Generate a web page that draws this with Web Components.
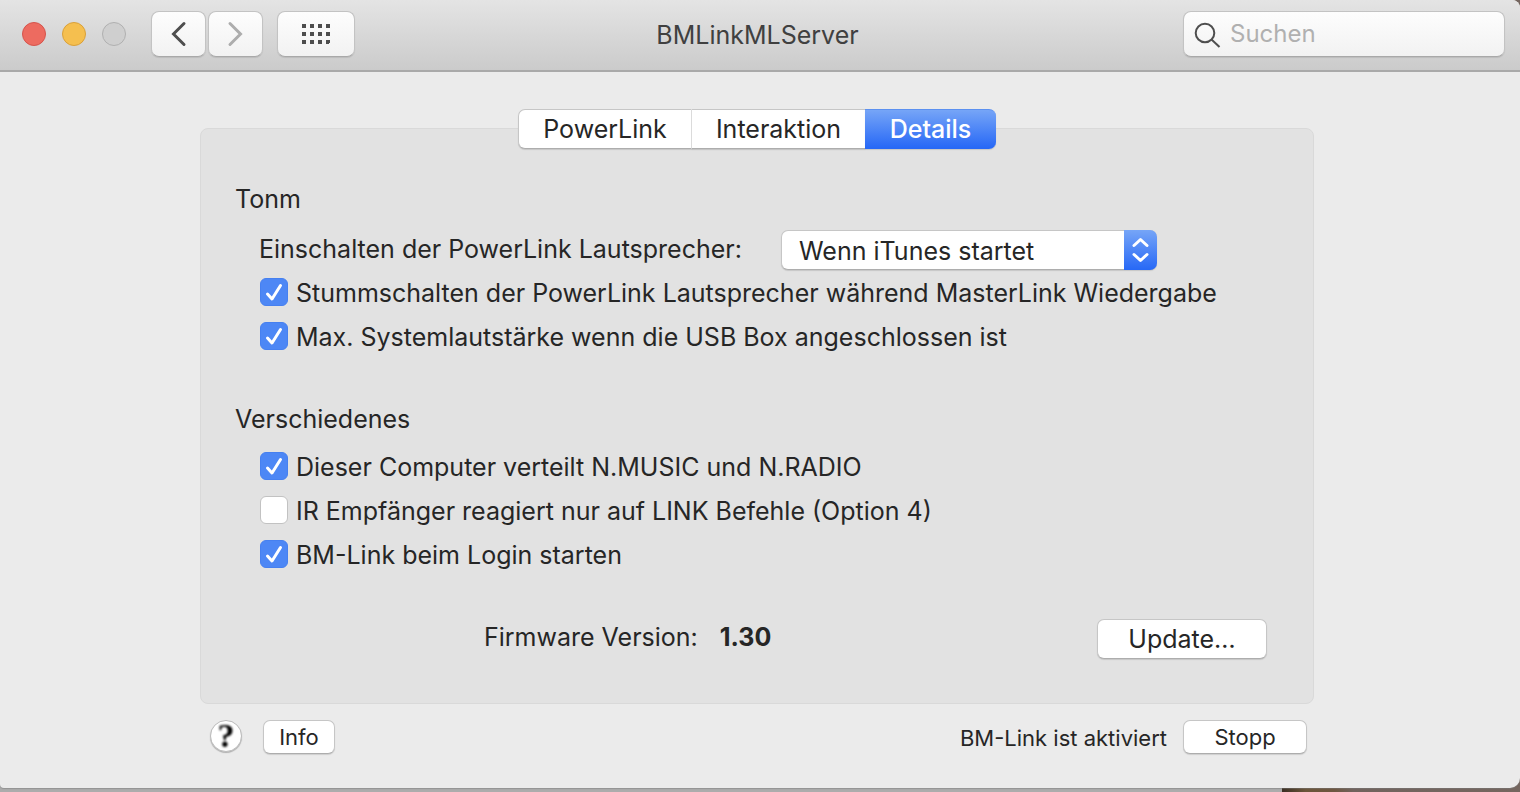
<!DOCTYPE html>
<html lang="de">
<head>
<meta charset="utf-8">
<title>BMLinkMLServer</title>
<style>
  html, body { margin: 0; }
  body {
    min-height: 100vh;
    font-family: Inter, "Liberation Sans", sans-serif;
    font-size: 25px;
    line-height: 32px;
    color: #262626;
    background: linear-gradient(90deg, #3a2d22, #6b5539 10%, #6e5640 22%, #71635d 30%, #75665f) right / 238px 100% no-repeat, #acacac;
  }
</style>
</head>
<body>
<pref-window>
  <tool-bar slot="toolbar"></tool-bar>
  <tab-panel>
    <pref-section heading="Tonm">
      <select-row></select-row>
      <check-row checked>Stummschalten der PowerLink Lautsprecher während MasterLink Wiedergabe</check-row>
      <check-row checked>Max. Systemlautstärke wenn die USB Box angeschlossen ist</check-row>
    </pref-section>
    <pref-section heading="Verschiedenes" spaced>
      <check-row checked>Dieser Computer verteilt N.MUSIC und N.RADIO</check-row>
      <check-row>IR Empfänger reagiert nur auf LINK Befehle (Option 4)</check-row>
      <check-row checked>BM-Link beim Login starten</check-row>
    </pref-section>
    <firmware-row></firmware-row>
  </tab-panel>
  <status-bar></status-bar>
</pref-window>

<script>
const define = (name, html, setup) => {
  const template = document.createElement('template');
  template.innerHTML = html;
  customElements.define(name, class extends HTMLElement {
    constructor() {
      super();
      this.attachShadow({ mode: 'open' }).append(template.content.cloneNode(true));
    }
    connectedCallback() { if (setup) setup(this, this.shadowRoot); }
  });
};

define('pref-window', `
<style>
  :host { display: block; background: #ebebeb; border-radius: 0 8px 10px 4px; overflow: hidden; box-shadow: 0 1px 1px #7c7c7c80; }
  main { padding: 37px 206px 34px 200px; }
</style>
<slot name="toolbar"></slot>
<main><slot></slot></main>`);

define('push-button', `
<style>
  :host { display: block; }
  button {
    box-sizing: border-box; display: block; width: 100%; height: var(--button-height, 34px); padding: 0;
    font: inherit; color: inherit; background: #fff; border: 1px solid #c6c6c6; border-bottom-color: #adadad;
    border-radius: 7px; box-shadow: 0 1px 1px #00000020;
  }
</style>
<button type="button"><slot></slot></button>`);

define('tool-bar', `
<style>
  :host {
    box-sizing: border-box; height: 72px; padding: 11px 15px 14px 22px; border-bottom: 2px solid #a9a9a9;
    background: linear-gradient(#e4e4e4, #cbcbcb);
    display: grid; grid-template-columns: 1fr auto 1fr; align-items: start;
  }
  .left { display: flex; align-items: center; }
  .lights { display: flex; gap: 16px; margin-right: 25px; }
  .lights button { box-sizing: border-box; width: 24px; height: 24px; padding: 0; border: 1px solid; border-radius: 50%; }
  .close { background: #ed6b60; border-color: #d5544c !important; }
  .min { background: #f5bf4f; border-color: #d9a03a !important; }
  .max { background: #cfcfcf; border-color: #b0b0b0 !important; }
  .nav { display: flex; gap: 2px; }
  .tool {
    box-sizing: border-box; height: 46px; width: 55px; padding: 0; border: 1px solid #c3c3c3; border-bottom-color: #a9a9a9; border-radius: 8px;
    background: linear-gradient(#fdfdfd, #f2f2f2); display: grid; place-items: center; box-shadow: 0 1px 1px #00000018;
  }
  .grid { width: 78px; margin-left: 14px; }
  h1 { margin: 0; font-size: 25px; line-height: 32px; font-weight: 400; color: #404040; padding: 8px 12px 0 0; }
  .search {
    box-sizing: border-box; width: 322px; height: 46px; justify-self: end; display: flex; align-items: center; gap: 8px; padding: 0 10px;
    border: 1px solid #c3c3c3; border-bottom-color: #a9a9a9; border-radius: 8px; background: linear-gradient(#fdfdfd, #f2f2f2); box-shadow: 0 1px 1px #00000018;
  }
  input { flex: 1; min-width: 0; border: 0; outline: 0; padding: 0; background: none; font: inherit; font-size: 24px; }
  input::placeholder { color: #b0b0b0; opacity: 1; }
  svg { display: block; }
</style>
<div class="left">
  <div class="lights">
    <button class="close" aria-label="Schließen"></button>
    <button class="min" aria-label="Minimieren"></button>
    <button class="max" aria-label="Zoomen" disabled></button>
  </div>
  <div class="nav">
    <button class="tool" aria-label="Zurück"><svg width="20" height="26" viewBox="0 0 20 26"><path d="M15 2.500 4.500 13 15 23.500" fill="none" stroke="#4e4e4e" stroke-width="3" stroke-linecap="round"/></svg></button>
    <button class="tool" aria-label="Vorwärts" disabled><svg width="20" height="26" viewBox="0 0 20 26"><path d="M4 2.500 14.500 13 4 23.500" fill="none" stroke="#adadad" stroke-width="3" stroke-linecap="round"/></svg></button>
  </div>
  <button class="tool grid" aria-label="Alle einblenden"><svg width="28" height="20" viewBox="0 0 28 20" fill="#4d4d4d"><path d="M0 0h4v4H0zM8 0h4v4H8zM16 0h4v4h-4zM24 0h4v4h-4zM0 8h4v4H0zM8 8h4v4H8zM16 8h4v4h-4zM24 8h4v4h-4zM0 16h4v4H0zM8 16h4v4H8zM16 16h4v4h-4zM24 16h4v3h-1v1h-3z"/></svg></button>
</div>
<h1>BMLinkMLServer</h1>
<label class="search">
  <svg width="28" height="28" viewBox="0 0 28 28" fill="none" stroke="#4e4e4e" stroke-width="2"><circle cx="11" cy="13" r="9.300"/><path d="m17.500 19.500 8 7.500"/></svg>
  <input type="search" placeholder="Suchen" aria-label="Suchen">
</label>`);

define('tab-panel', `
<style>
  :host { display: block; }
  .tabs { position: relative; display: flex; width: max-content; margin: 0 auto; }
  .tabs button {
    box-sizing: border-box; height: 40px; padding: 0; font: inherit; color: inherit; background: #fff;
    border: 1px solid #c6c6c6; border-bottom-color: #adadad; box-shadow: 0 1px 1px #00000020;
  }
  .one { width: 174px; border-radius: 7px 0 0 7px; border-right-color: #e0e0e0 !important; }
  .two { width: 173px; border-left: 0 !important; border-right: 0 !important; }
  .tabs .three {
    width: 131px; border-radius: 0 7px 7px 0; color: #fff; font-weight: 500; background: linear-gradient(#76a5f7, #2768f6);
    border: 0; border-top: 1px solid #5b90f0; border-bottom: 1px solid #2768f6;
  }
  section { margin-top: -21px; padding: 54px 46px 44px 34px; background: #e2e2e2; border: 1px solid #d9d9d9; border-radius: 8px; }
</style>
<div class="tabs" role="tablist">
  <button class="one" role="tab">PowerLink</button>
  <button class="two" role="tab">Interaktion</button>
  <button class="three" role="tab" aria-selected="true">Details</button>
</div>
<section role="tabpanel" aria-label="Details"><slot></slot></section>`);

define('pref-section', `
<style>
  :host { display: block; }
  :host([spaced]) { margin-top: 45px; }
  h2 { margin: 0 0 15px; font: inherit; }
  :host([spaced]) h2 { margin-bottom: 9px; }
  .rows { padding-left: 24px; }
</style>
<h2></h2>
<div class="rows"><slot></slot></div>`,
(host, root) => { root.querySelector('h2').textContent = host.getAttribute('heading'); });

define('select-row', `
<style>
  :host { display: flex; align-items: center; gap: 30px; }
  label { min-width: 492px; padding-bottom: 2px; }
  .box { position: relative; width: 376px; }
  select {
    appearance: none; box-sizing: border-box; display: block; width: 100%; height: 40px; padding: 2px 40px 0 17px; font: inherit; color: inherit;
    background: #fff; border: 1px solid #c6c6c6; border-bottom-color: #adadad; border-radius: 7px; box-shadow: 0 1px 1px #00000020;
  }
  svg { position: absolute; right: 0; top: 0; border-radius: 0 7px 7px 0; background: linear-gradient(#76a5f7, #2768f6); pointer-events: none; }
</style>
<label for="power">Einschalten der PowerLink Lautsprecher:</label>
<div class="box">
  <select id="power"><option>Wenn iTunes startet</option></select>
  <svg width="33" height="40" viewBox="0 0 33 40" fill="none" stroke="#fff" stroke-width="3" stroke-linecap="round" stroke-linejoin="round"><path d="m10 15.500 6.500-6 6.500 6m-13 9 6.500 6 6.500-6"/></svg>
</div>`);

define('check-row', `
<style>
  :host { display: block; }
  label { display: flex; align-items: center; height: 44px; gap: 8px; margin-left: 1px; }
  .box { display: grid; flex: none; }
  .box > * { grid-area: 1 / 1; }
  input { appearance: none; box-sizing: border-box; width: 28px; height: 28px; margin: 0; border: 1px solid #c2c2c2; border-radius: 6px; background: #fff; }
  input:checked { background: #4d87f5; border-color: #4680f0; }
  svg { display: none; pointer-events: none; }
  input:checked + svg { display: block; }
  .text { padding-top: 2px; }
</style>
<label><span class="box"><input type="checkbox"><svg width="28" height="28" viewBox="0 0 28 28" fill="none" stroke="#fff" stroke-width="3" stroke-linecap="round" stroke-linejoin="round"><path d="m7.500 16 4.500 5 8.500-13.500"/></svg></span><span class="text"><slot></slot></span></label>`,
(host, root) => { root.querySelector('input').checked = host.hasAttribute('checked'); });

define('firmware-row', `
<style>
  :host { display: flex; align-items: center; margin-top: 43px; }
  dl { display: flex; gap: 22px; margin: 0 auto 0 249px; padding-bottom: 4px; }
  dd { margin: 0; font-weight: 700; }
  push-button { width: 170px; --button-height: 40px; }
</style>
<dl><dt>Firmware Version:</dt><dd>1.30</dd></dl>
<push-button>Update…</push-button>`);

define('status-bar', `
<style>
  :host { display: flex; align-items: center; margin-top: 16px; padding: 0 7px 0 10px; font-size: 22px; line-height: 28px; }
  .help {
    box-sizing: border-box; width: 32px; height: 32px; padding: 0; margin-right: 21px; border: 1px solid #bcbcbc; border-radius: 50%; align-self: start;
    background: #fff; box-shadow: 0 1px 1px #00000040; color: #000; font: bold 34px/28px "Liberation Serif", serif;
  }
  .help span { display: block; filter: blur(1px); }
  .info { width: 72px; }
  .state { margin-left: auto; margin-right: 16px; padding-top: 2px; }
  .stop { width: 124px; }
</style>
<button class="help" aria-label="Hilfe"><span>?</span></button>
<push-button class="info">Info</push-button>
<span class="state">BM-Link ist aktiviert</span>
<push-button class="stop">Stopp</push-button>`);
</script>
</body>
</html>
